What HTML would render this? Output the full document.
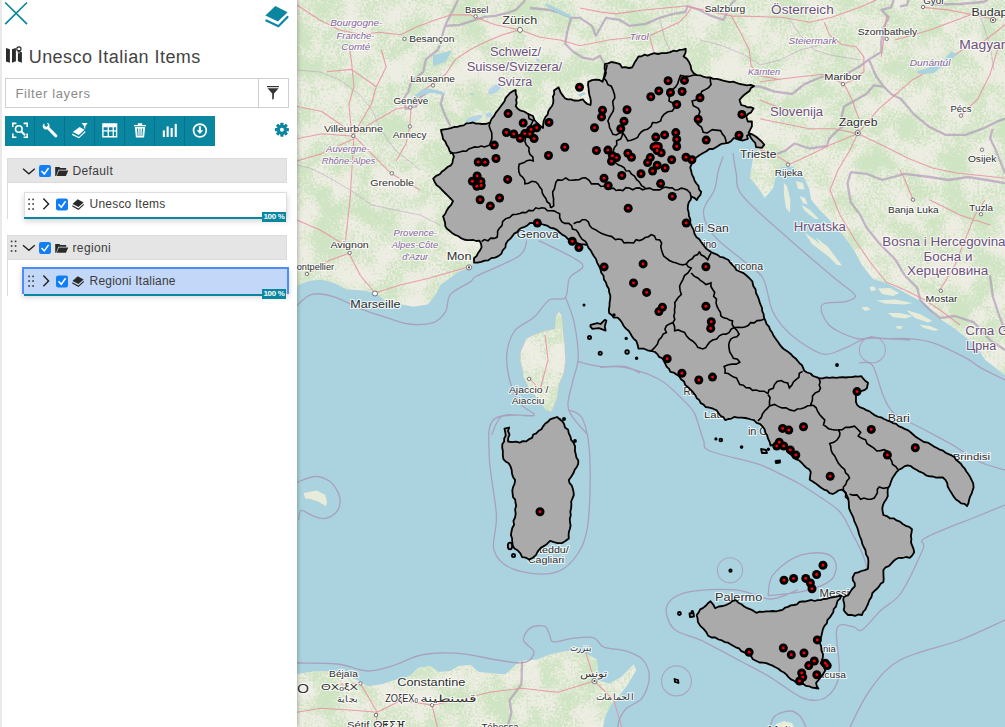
<!DOCTYPE html>
<html><head><meta charset="utf-8">
<style>
html,body{margin:0;padding:0;width:1005px;height:727px;overflow:hidden;background:#f2efe9;font-family:"Liberation Sans",sans-serif;}
#map{position:absolute;left:0;top:0;width:1005px;height:727px;}
#panel{position:absolute;left:0;top:0;width:297px;height:727px;background:#fff;box-shadow:1px 0 4px rgba(0,0,0,0.25);}
#panel .edge{position:absolute;left:0;top:0;width:2px;height:727px;background:#e9e9e9;}
.abs{position:absolute;}
.title{left:28.7px;top:47px;font-size:18px;color:#444;white-space:nowrap;letter-spacing:0.45px}
.filter{left:5px;top:78px;width:282px;height:28px;border:1px solid #cfcfcf;background:transparent}
.filter .ph{position:absolute;left:9.4px;top:7px;font-size:13px;color:#8a8a8a;letter-spacing:0.62px}
.filter .btn{position:absolute;left:252px;top:0;width:30px;height:28px;border-left:1px solid #cfcfcf}
.tb{left:5px;top:116px;width:210px;height:30px;background:#0a86a0}
.tb .b{position:absolute;top:0;width:30px;height:30px;}
.tb .sep{position:absolute;top:0;width:1px;height:30px;background:#06718a}
.grp{left:7px;width:278px;height:23px;background:#e5e5e5;border:1px solid #dcdcdc}
.vline{left:7px;width:1px;background:#dadada}
.item{left:24px;width:261px;height:24px;background:#fff;border:1px solid #dedede;box-shadow:0 3px 6px rgba(0,0,0,0.18)}
.item.sel{left:22px;width:263px;height:25px;background:#c3d7f8;border:2px solid #4f8cf3;border-bottom:none}
.prog{height:2px;background:#0a86a0}
.badge{width:24px;height:10px;background:#0a86a0;color:#fff;font-size:8px;font-weight:bold;line-height:10px;text-align:center;letter-spacing:-0.3px}
.lbl{font-size:12px;color:#3c3c3c;white-space:nowrap}
.lbl.sm{letter-spacing:0.22px}
.cb{width:12px;height:12px;border-radius:2px;background:#0d7df2}
</style></head>
<body>
<svg id="map" width="1005" height="727" viewBox="0 0 1005 727">
<defs>
<filter id="tex" x="297" y="0" width="708" height="727" filterUnits="userSpaceOnUse" color-interpolation-filters="sRGB">
<feTurbulence type="fractalNoise" baseFrequency="0.45" numOctaves="2" seed="3" result="n1"/>
<feTurbulence type="fractalNoise" baseFrequency="0.035" numOctaves="3" seed="7" result="n2"/>
<feComposite in="n1" in2="n2" operator="arithmetic" k1="0" k2="0.45" k3="0.55" k4="0" result="n"/>
<feColorMatrix in="n" type="matrix" values="0 0 0 0 0.81  0 0 0 0 0.895  0 0 0 0 0.76  6 0 0 0 -2.55"/>
</filter>
<clipPath id="landclip"><use href="#eur"/><use href="#afr"/><use href="#cors"/></clipPath>
</defs>
<rect x="0" y="0" width="1005" height="727" fill="#aad3df"/>
<path id="eur" fill="#eeede3" d="M297,0 L1005,0 L1005,375 985.2,360 980.3,352.2 972,342.3 963.8,335.7 955.5,329.1 945.6,322.5 935.7,315.9 929.1,307.7 920.9,301 911,296.1 899.4,289.5 886.2,282.9 873,279 862,265 855,252 849,242.4 842.4,234.2 835.8,227.6 827.6,217.7 819.3,209.4 811.1,199.5 809.4,189.6 804.5,178 792.9,166.5 781.4,166.5 774.8,179.7 773.1,188 764.9,197.9 758.3,188 750,178 752.6,161 759,145.3 754,134 700,120 480,250 475.3,260.9 470.3,267 457.9,272 448,279.4 440.6,284.4 435.6,294.3 428.2,304.2 413.4,306.7 401,304.2 386.1,301.7 376.2,293 363.8,290.6 346.5,289.3 334.1,283.1 321.8,279.4 309.4,280.7 297,285.6 Z"/>
<path id="afr" fill="#eeede3" d="M297,674 317.2,671 337.4,672 357.6,680.2 367.7,686.2 381.8,684.2 394,680.2 410,676.1 418.2,668.1 430.3,666 438.4,672.1 450.5,671.1 458.6,666 470.7,665 478.8,672.1 500,674.1 505.5,674.2 520,661.1 537.5,659.4 551.4,654.1 568.9,650.7 586.4,654.1 596.9,659.4 597.7,669.9 598.6,680.3 609.1,683.8 621.3,676.9 633.5,664.6 636.2,669.9 628.3,683.8 617.8,697.8 610.8,704.8 605.6,715.3 603,727 L297,727Z"/>
<!-- Corsica -->
<path id="cors" fill="#eeede3" stroke="#c9b8c9" stroke-width="0.6" d="M558.9,311.6 561.8,315.4 562.8,328.9 564.7,344.3 565.7,361.6 563.8,373.2 558.9,384.7 557,398.2 553.2,407.8 551.2,411.7 545.5,409.7 541.6,404 535.8,396.3 530,390.5 526.2,382.8 523.3,377 522.4,369.3 520.4,361.6 520.4,352 526.2,338.5 533.9,334.7 545.5,330.8 555,328.9 556,315.4Z"/>
<rect x="297" y="0" width="708" height="727" filter="url(#tex)" clip-path="url(#landclip)"/>
<path fill="none" stroke="#a68fb4" stroke-opacity="0.6" stroke-width="2.3" stroke-linejoin="round" d="M458,0 L452,12 L447.8,19.9 L445.6,24.8 L443.2,32.2 L438.2,49.5 L425.8,59.4 L423.3,71.8 L411,81.7 L408.5,91.7 L403.5,99.1 L406,109 L415.9,106.5 L420.9,96.6 L429.4,91.1 L440.5,92.3 L443.2,94.1 L440.7,104 L445.6,116.4 L450.6,126.3 M445,26 L460,24.9 L474.9,19.9 L484.9,16.9 L494.8,15.9 L507.8,12.9 L515.7,10 L519.7,6 L523.7,2 L525,0 M530,8 L549.6,10 L560,12.9 L571.1,17.9 M571.1,17.9 L567.2,31.8 L565.2,43.8 L573.1,51.7 L583.1,57.7 L593,59.7 L600,55.7 L604.8,64.2 M571.1,17.9 L580,17.9 L591.9,25.9 L595.9,35.8 L605.9,17.9 L619.8,19.9 L629.8,25.9 L645.7,23.9 L659.6,17.9 L673.5,13.9 L685.5,11.9 L687.5,6 L699.4,10 L711.3,15.9 L723.3,19.9 L727.3,11.9 L731.2,4 L735.2,0 M754,86.2 L760,86.6 L774.8,91.6 L792.2,94 L804.5,84.1 L821.9,76.7 L841.7,76.7 L859,66.8 L868.9,59.4 L881.3,52 L881.3,42.1 L883.7,27.2 L888.7,17.3 L881.3,9.9 L891.2,7.4 L893.6,0 M868.9,59.4 L876.3,76.7 L883.7,86.6 L891.2,94 L901,99 L913.4,113.8 L928.3,126.2 L945.6,134.9 L965.4,134.9 L982.7,128.7 L997.6,121.3 L1005,118.8 M883.7,86.6 L873.8,85.4 L866.4,94 L844.1,106.4 L841.7,116.3 L846.6,123.7 L836.7,131.2 L829.3,138.6 L826.8,146 L809.5,148.5 L794.6,143.5 L784.7,151 L774.8,154.7 L762,151 M992.6,128.7 L990.1,138.6 L995.1,148.5 L1000,160.9 L1005,173.2 M850.7,172.2 L866.5,173.8 L882.3,180 L904.5,173.8 L929.8,177 L948.7,180 L967.7,177 L986.7,180 L1005,183.2 M850.7,172.2 L847.5,183.2 L850.7,202.2 L860.2,214.9 L866.5,227.5 L879.1,243.3 L895,259.2 L904.5,275 L917.1,287.6 L920.3,300.3 L929.8,309.7 L940,318 L955,316 L974,322.4 L990,340 L1005,350 M989.8,275 L993,297 L999.3,316 L1005,330 M522,661 L521.5,684.2 L515.5,692.3 L509.5,700.3 L511.5,712.3 L507.5,727 M900,6.3 L907,5 L908.4,0 M930,4.5 L960,4 L983.6,2 L988,0"/>
<path fill="none" stroke="#b99fc0" stroke-opacity="0.55" stroke-width="1" d="M297,70 L320,72 L340,80 L360,95 L372,110 L380,128 L388,140 L395,150 L408,160 L420,170 M297,165 L310,168 L330,178 L350,190 L372,205 L395,210 L420,215 L440,225 M660,20 L665,40 L675,60 L685,70 M700,40 L720,45 L745,55 L760,65 L780,60 L800,50 L820,45 M790,20 L800,35 L815,50 L830,55 L860,60 M981,18 L985,30 L990,45 L994,70"/>
<path fill="none" stroke="#e8919f" stroke-opacity="0.85" stroke-width="1.1" stroke-linejoin="round" d="M297,5 L319.3,19.8 L339.1,29.7 L361.4,34.7 L378.7,32.2 L401,34.7 L415.9,27.2 L435.7,19.8 L450.6,14.9 L470.4,14.9 L475.4,17.3 M349,44.6 L351.5,61.9 L354,86.7 L349,104 L351.5,133.8 M381.2,49.5 L386.2,66.9 L376.3,86.7 L371.3,104 L354,133.8 M354,133.8 L378.7,118.9 L396.1,109 L411,106.5 M411,106.5 L420.9,91.7 L435.7,81.7 L445.6,74.3 L455.5,59.4 L470.4,49.5 L485.3,42.1 L502.6,34.7 L520,29.7 M475.4,17.3 L495.2,24.8 L520,29.7 L540,37.2 L560,40 L580,45.8 L609.9,39.8 L649.7,35.8 M354,136.2 L371.3,153.6 L391.1,173.4 L420,190 M409.7,126.3 L406,143.7 L396.1,161 M411,109 L409.7,126.3 M297,106.5 L321.8,111.5 L354,133.8 M297,138.7 L321.8,133.8 L354,136.2 M297,161 L321.8,153.6 L354,138.7 M326.7,71.8 L351.5,69.4 L376.3,86.7 M354,136.2 L350,200 L345,245 L360,275 L375,293 M375,293 L400,285 L430,278 L468,267 M307,274 L330,260 L350,253 M297,220 L320,230 L345,245 M580,8 L599.9,11.9 L615.8,13.9 L643.7,10 L665.6,8 L685.5,6 L731.2,15.9 L782.3,17.3 L809.5,22.3 L831.8,17.3 L859,7.4 L876.3,0 M649.7,35.8 L679.5,21.9 L685.5,15.9 L691.4,8 M649.7,35.8 L653.6,51.7 M731.2,15.9 L739.2,29.9 L749.2,49.8 L751.1,65.7 L759.1,75.6 L780,79.6 M824.3,22.3 L829.3,34.6 L841.7,44.5 L856.5,47 L863.9,56.9 L863.9,71.8 L854,79.2 L844.1,84.1 L851.6,99 L859,118.8 L857.7,133.6 M760,81.7 L779.8,79.2 L799.6,76.7 L824.3,74.2 L844.1,84.1 M760,118.8 L784.7,123.7 L809.5,128.7 L834.2,128.7 L857.7,133.6 M857.7,133.6 L883.7,146 L908.5,158.4 L933.2,168.3 L958,173.2 L982.7,175.7 L1005,178.2 M1005,24.7 L982.7,42.1 L962.9,49.5 L940.6,64.3 L913.4,79.2 L896.1,94 L878.8,108.9 L857.7,133.6 M923.3,7.4 L948.1,9.9 L972.8,14.8 L997.6,19.8 M886.7,14.8 L883.7,39.6 L881.3,56.9 M961,115.6 L977.8,99 L990.1,74.2 L997.6,49.5 M857.7,133.6 L830,145 L810,155 L790,164 L775,155 L760,150 M857.7,133.6 L850,150 L838,170 L830,190 L840,215 L855,240 L870,262 L886,282 L905,290 L925,300 L940,310 L960,325 M913,199.7 L905,180 L900,170 M940,290 L955,265 L965,240 L975,215 L985,200 M297,712.3 L321,708.3 L353.1,710.3 L377.2,712.3 L401.2,700.3 L432.1,705.1 L457.4,700.3 L489.5,692.3 L521.5,688.3 L557.6,692.3 L594.5,681 L613.8,700.3 L621.8,727 M377.2,712.3 L376,727 M594.5,681 L585.7,652.2 M432.1,705.1 L437.3,727 M337.1,684.2 L360.4,683.4 L377.2,712.3 M545,335 L548,360 L540,390 L530,379 M760,100 L790,112 L810,110 M895,40 L930,30 L970,15 M930,200 L960,215 L990,225"/>
<path fill="none" stroke="#a898b8" stroke-opacity="0.85" stroke-width="1.3" stroke-linejoin="round" d="M297.0,305.4 C299.5,303.5 305.7,295.7 311.9,294.3 C318.1,292.9 325.9,294.3 334.1,296.8 C342.4,299.3 353.1,305.8 361.4,309.1 C369.7,312.4 375.9,314.1 383.7,316.6 C391.5,319.1 400.1,323.0 408.4,324.0 C416.6,325.0 427.0,324.8 433.2,322.7 C439.4,320.6 442.7,316.3 445.6,311.6 C448.5,306.9 446.4,299.2 450.5,294.3 C454.6,289.4 465.9,285.0 470.3,281.9 C474.8,278.8 469.1,280.1 477.2,275.8 C485.3,271.5 510.8,261.9 519.0,256.0 C527.2,250.1 525.4,243.2 526.7,240.6 M538.8,240.6 C544.7,243.5 566.7,253.8 574.0,258.2 C581.3,262.6 583.5,263.7 582.8,267.0 C582.1,270.3 572.5,272.9 569.6,278.0 C566.7,283.1 568.6,294.1 565.2,297.8 C561.8,301.5 554.5,296.8 549.3,300.0 C544.1,303.2 539.7,312.2 533.9,317.3 C528.1,322.4 519.2,325.0 514.7,330.8 C510.2,336.6 508.0,344.3 507.0,352.0 C506.0,359.7 507.0,368.7 508.9,377.0 C510.8,385.3 514.3,395.6 518.5,402.0 C522.7,408.4 536.5,413.2 533.9,415.5 C531.3,417.8 510.2,412.3 503.1,415.5 C496.1,418.7 493.5,431.6 491.6,434.8 M565.2,297.8 C565.4,298.2 565.1,295.8 566.6,300.0 C568.1,304.2 572.4,313.5 574.3,323.1 C576.2,332.7 578.5,347.9 578.2,357.8 C577.9,367.8 574.0,374.2 572.4,382.8 C570.8,391.4 566.0,401.0 568.6,409.7 C571.2,418.4 584.6,430.6 587.8,434.8 M578.2,361.6 C581.7,362.4 591.7,365.6 599.4,366.4 C607.1,367.2 617.6,365.3 624.4,366.4 C631.2,367.5 637.4,372.1 640.0,373.2 M600.0,367.4 C604.0,367.4 614.3,365.4 624.2,367.4 C634.1,369.4 649.5,374.0 659.4,379.5 C669.3,385.0 677.7,394.7 683.6,400.4 C689.5,406.1 691.3,407.0 694.6,413.6 C697.9,420.2 700.8,433.8 703.4,440.0 C706.0,446.2 700.8,447.0 710.0,451.0 C719.2,455.0 746.3,460.2 758.4,464.2 C770.5,468.2 775.7,471.9 782.6,475.2 C789.5,478.5 797.1,482.5 800.0,484.0 M533.9,415.5 C527.2,416.1 501.4,412.4 494.0,419.3 C486.6,426.2 488.9,440.7 489.3,456.7 C489.7,472.7 495.6,499.6 496.4,515.2 C497.2,530.8 491.3,541.2 494.0,550.2 C496.7,559.2 503.4,565.0 512.7,568.9 C522.1,572.8 540.0,575.1 550.1,573.6 C560.2,572.1 567.3,567.4 573.5,559.6 C579.7,551.8 584.8,543.9 587.5,526.8 C590.2,509.6 590.6,474.6 589.8,456.7 C589.0,438.8 586.3,427.1 582.8,419.3 C579.3,411.5 571.0,411.3 568.6,409.7 M723.0,156.5 C722.2,159.1 719.4,166.4 718.0,172.0 C716.6,177.6 716.8,183.3 714.4,190.0 C712.0,196.7 703.4,204.3 703.4,212.0 C703.4,219.7 707.8,228.1 714.4,236.2 C721.0,244.3 734.9,253.4 743.0,260.4 C751.1,267.4 758.0,269.9 762.8,278.0 C767.6,286.1 768.3,300.7 771.6,308.8 C774.9,316.9 777.9,320.9 782.6,326.4 C787.3,331.9 793.1,337.2 800.0,341.8 C806.9,346.4 816.3,353.2 824.0,354.2 C831.7,355.2 840.1,349.8 846.0,347.6 C851.9,345.4 854.8,342.8 859.2,341.0 C863.6,339.2 870.2,337.3 872.4,336.6 M733.0,153.2 C733.5,156.5 734.6,165.8 736.2,173.0 C737.8,180.2 734.0,185.2 742.8,196.2 C751.6,207.2 773.6,225.3 789.0,239.0 C804.4,252.7 824.0,269.3 835.0,278.6 C846.0,287.9 853.3,291.1 855.0,295.0 C856.7,298.9 850.5,300.0 845.0,301.7 C839.5,303.4 824.7,301.1 822.0,305.0 C819.3,308.9 823.5,319.5 829.0,325.0 C834.5,330.5 847.3,335.8 855.0,338.0 C862.7,340.2 865.8,337.7 875.0,338.0 C884.2,338.3 904.2,339.7 910.0,340.0 M883.4,338.8 C888.2,338.8 903.6,338.1 912.0,338.8 C920.4,339.5 924.8,339.9 934.0,343.2 C943.2,346.5 959.3,354.6 967.0,358.6 C974.7,362.6 973.7,363.8 980.0,367.4 C986.3,371.0 1000.8,377.9 1005.0,380.0 M859.2,363.0 C861.4,363.4 868.4,359.7 872.4,365.2 C876.4,370.7 879.7,387.9 883.4,396.0 C887.1,404.1 887.8,408.1 894.4,413.6 C901.0,419.1 913.5,423.9 923.0,429.0 C932.5,434.1 942.1,438.9 951.6,444.4 C961.1,449.9 971.1,457.7 980.0,462.0 C988.9,466.3 1000.8,468.7 1005.0,470.0 M800.0,484.0 C803.3,486.2 813.3,492.3 820.0,497.0 C826.7,501.7 834.5,505.7 840.0,512.0 C845.5,518.3 849.3,528.2 853.0,535.0 C856.7,541.8 859.7,547.0 862.0,553.0 C864.3,559.0 867.0,564.3 867.0,571.0 C867.0,577.7 862.8,589.3 862.0,593.0 M1005.0,505.0 C1000.5,506.8 991.3,510.5 978.0,516.0 C964.7,521.5 934.4,532.5 925.2,538.0 C916.0,543.5 927.0,539.8 923.0,549.0 C919.0,558.2 908.0,582.8 901.0,593.0 C894.0,603.2 887.7,603.8 881.2,610.0 C874.7,616.2 866.7,627.2 862.0,630.0 C857.3,632.8 857.2,626.8 853.0,626.6 C848.8,626.4 839.1,620.9 836.8,628.9 C834.5,636.9 841.0,663.3 839.1,674.8 C837.2,686.3 831.4,694.0 825.3,697.8 C819.2,701.6 811.6,701.2 802.4,697.8 C793.2,694.3 780.5,683.2 770.2,677.1 C759.9,671.0 751.9,667.1 740.4,661.0 C728.9,654.9 712.4,645.8 701.3,640.4 C690.2,635.0 679.5,634.6 673.8,628.9 C668.1,623.1 664.6,612.0 666.9,605.9 C669.2,599.8 676.1,594.8 687.6,592.1 C699.1,589.4 722.0,588.8 735.8,589.9 C749.6,591.0 759.9,599.0 770.2,599.0 C780.5,599.0 793.2,591.4 797.8,589.9 M768.0,595.7 C768.8,592.3 768.0,581.9 772.5,575.5 C777.0,569.1 786.8,561.1 795.0,557.4 C803.2,553.6 815.2,552.2 822.0,553.0 C828.8,553.8 834.0,557.5 835.5,562.0 C837.0,566.5 836.2,575.1 831.0,580.0 C825.8,584.9 814.5,588.6 804.0,591.2 C793.5,593.8 774.0,595.0 768.0,595.7 M770.0,727.0 C770.8,725.2 771.7,718.7 775.0,716.0 C778.3,713.3 785.8,711.0 790.0,711.0 C794.2,711.0 797.3,713.3 800.0,716.0 C802.7,718.7 805.0,725.2 806.0,727.0 M297.0,663.0 C303.7,663.2 325.6,662.7 337.4,664.0 C349.2,665.3 358.1,670.8 367.7,671.0 C377.3,671.2 386.7,667.5 395.0,665.0 C403.3,662.5 409.8,658.0 417.3,656.0 C424.8,654.0 432.0,653.3 440.0,653.0 C448.0,652.7 452.1,652.6 465.4,654.2 C478.7,655.9 508.6,663.2 520.0,662.9 C531.4,662.6 533.4,656.2 534.0,652.4 C534.6,648.6 524.1,644.3 523.5,640.2 C522.9,636.1 527.0,630.2 530.5,627.9 C534.0,625.6 541.3,625.0 544.5,626.2 C547.7,627.4 548.2,632.3 549.7,634.9 C551.2,637.5 549.4,641.3 553.2,641.9 C557.0,642.5 565.7,639.1 572.4,638.4 C579.1,637.7 588.2,636.1 593.4,637.6 C598.6,639.1 598.6,645.0 603.8,647.2 C609.0,649.4 618.4,648.7 624.8,650.7 C631.2,652.7 638.2,655.0 642.3,659.4 C646.4,663.8 649.3,670.5 649.3,676.9 C649.3,683.3 646.1,692.6 642.3,697.8 C638.5,703.0 630.3,704.8 626.5,708.3 C622.7,711.8 621.1,715.7 619.6,718.8 C618.1,721.9 618.1,725.6 617.8,727.0 M297.0,482.3 C300.0,481.3 309.7,476.6 315.2,476.5 C320.7,476.4 326.1,478.8 330.0,481.5 C333.9,484.2 336.6,489.4 338.3,493.0 C340.0,496.6 340.4,499.7 340.0,503.0 C339.6,506.3 338.4,510.2 335.8,512.8 C333.2,515.4 327.9,518.0 324.2,518.6 C320.5,519.2 317.4,517.6 313.5,516.2 C309.6,514.8 303.6,509.8 301.1,510.4 C298.6,511.0 299.1,518.4 298.7,520.0 M1005.0,620.0 C997.5,623.3 977.5,633.3 960.0,640.0 C942.5,646.7 915.0,651.7 900.0,660.0 C885.0,668.3 878.3,678.8 870.0,690.0 C861.7,701.2 853.3,720.8 850.0,727.0"/>
<circle cx="872.4" cy="349.8" r="13" fill="none" stroke="#a898b8" stroke-opacity="0.75" stroke-width="1.1"/>
<circle cx="676.5" cy="680.9" r="15" fill="none" stroke="#a898b8" stroke-opacity="0.75" stroke-width="1.1"/>
<circle cx="730" cy="570.3" r="12.6" fill="none" stroke="#a898b8" stroke-opacity="0.75" stroke-width="1.1"/>
<g fill="#a9cdee" opacity="0.75"><ellipse cx="495" cy="89" rx="8" ry="3.5" transform="rotate(-35 495 89)"/><ellipse cx="474" cy="119" rx="9" ry="2.8" transform="rotate(-20 474 119)"/><ellipse cx="489" cy="115" rx="3.5" ry="2.5"/><circle cx="472" cy="94" r="1.4"/><ellipse cx="538" cy="60" rx="2" ry="1.5"/></g>
<g fill="#aad3df"><path d="M415,95.5 L421.4,89.9 L427.8,88.3 L435.7,89.9 L442.1,91.5 L445.3,93.9 L441.3,94.7 L434.1,93.1 L427,93.1 L421.4,95.5 L416.6,97.1 L413.4,105 L411.8,106.6 L412,100Z"/><path d="M433,55.3 L451.9,50.6 L445.6,61.6 L433,66.4Z"/><path d="M545,3 L552,6 L560,10 L572,16 L570,18 L558,13 L546,6Z"/><path d="M578,94.5 L584,92.3 L586,94 L580,96.5Z"/><path d="M916.3,71.4 L929.5,67.3 L942.8,60.6 L951.8,51.6 L956.8,54.9 L948.5,61.5 L933.7,73 L918.8,73.9Z"/></g>
<g fill="#e6ecd9"><path d="M783.8,183 L787,186 L790.4,200 L790,212.7 L786,208 L784,195Z"/><path d="M796,181 L803,183 L804.5,189.6 L798,189Z"/><path d="M799.5,196 L805,198 L807.8,204.5 L803,203Z"/><path d="M801,204.5 L810,210 L819,219 L815,219 L805,211Z"/><path d="M804.5,232.5 L815,240 L832.5,255.6 L828,256 L812,244Z"/><path d="M816,237.5 L828,247 L842,265.5 L837,265 L824,252Z"/><path d="M878,288.5 L890,288 L899.4,293 L893,296.1 L882,294Z"/><path d="M876.3,300.5 L895,299.4 L912.6,303 L905,304.4 L885,303.5Z"/><path d="M887.9,313 L900,313 L912.6,316 L905,318.4 L893,317Z"/><path d="M906,310 L920,314 L932.4,321 L928,322.5 L915,318Z"/><path d="M861.5,307.5 L867,306.8 L870.5,309.5 L865,311Z"/><path d="M896,326 L902.7,326.5 L901,329 L897,328.5Z"/><path d="M919.2,324.5 L930,326 L939,330 L934,330.8 L924,328Z"/><path d="M869.7,287 L874,286.2 L876.3,290 L871,291.2Z"/><path d="M303.6,493 L316.8,490.6 L325,494.7 L327.1,502.1 L325.9,506.2 L317.6,501.3 L309.4,498.8 L305.3,498.8Z"/><path d="M776,724 L784,721 L792,723 L794,727 L776,727Z"/></g>
<g fill="#fff" stroke="#666" stroke-width="0.9"><circle cx="475.6" cy="16.4" r="1.7"/><circle cx="404.5" cy="38.9" r="1.7"/><circle cx="433" cy="85.4" r="1.7"/><circle cx="410.2" cy="107.5" r="1.7"/><circle cx="353.3" cy="136" r="1.7"/><circle cx="409.9" cy="126.5" r="1.7"/><circle cx="391.8" cy="173.3" r="1.7"/><circle cx="349.7" cy="252.9" r="1.7"/><circle cx="306.9" cy="274" r="1.7"/><circle cx="886.7" cy="38.9" r="1.7"/><circle cx="842.9" cy="84.1" r="1.7"/><circle cx="961" cy="115.6" r="1.7"/><circle cx="982" cy="149.7" r="1.7"/><circle cx="788" cy="164.6" r="1.7"/><circle cx="913" cy="199.7" r="1.7"/><circle cx="981" cy="214.2" r="1.7"/><circle cx="940.8" cy="290.8" r="1.7"/><circle cx="529.1" cy="378.9" r="1.7"/><circle cx="360.4" cy="683.4" r="1.7"/><circle cx="432.1" cy="705.1" r="1.7"/><circle cx="376" cy="715.1" r="1.7"/><circle cx="923" cy="7" r="1.7"/><circle cx="520" cy="29.9" r="2.5"/><circle cx="375" cy="293.5" r="2.5"/><circle cx="469" cy="267.4" r="2.6"/><circle cx="857.7" cy="133.1" r="2.6"/><circle cx="594.5" cy="681" r="2.6"/><circle cx="993" cy="20" r="2.6"/></g>
<g fill="#444"><circle cx="469" cy="267.4" r="1.1"/><circle cx="857.7" cy="133.1" r="1.1"/><circle cx="594.5" cy="681" r="1.1"/><circle cx="993" cy="20" r="1.1"/></g>
<g font-family="Liberation Sans, sans-serif" stroke="#fff" stroke-opacity="0.75" stroke-width="2.2" stroke-linejoin="round" style="paint-order:stroke"><text x="465" y="12.9" font-size="9.36" textLength="23.4" lengthAdjust="spacingAndGlyphs" fill="#2f2f2f" style="">Basel</text><text x="502.3" y="24.4" font-size="11.65" textLength="34.8" lengthAdjust="spacingAndGlyphs" fill="#2f2f2f" style="">Zürich</text><text x="489.9" y="56.2" font-size="12.27" textLength="51.2" lengthAdjust="spacingAndGlyphs" fill="#6e5179" style="">Schweiz/</text><text x="466.7" y="71" font-size="12.27" textLength="95.5" lengthAdjust="spacingAndGlyphs" fill="#6e5179" style="">Suisse/Svizzera/</text><text x="497.5" y="85.5" font-size="12.27" textLength="34.8" lengthAdjust="spacingAndGlyphs" fill="#6e5179" style="">Svizra</text><text x="330.2" y="26" font-size="9.88" textLength="52.2" lengthAdjust="spacingAndGlyphs" fill="#86659a" style="font-style:italic;">Bourgogne-</text><text x="336.5" y="38.5" font-size="9.88" textLength="38.0" lengthAdjust="spacingAndGlyphs" fill="#86659a" style="font-style:italic;">Franche-</text><text x="341.3" y="49.5" font-size="9.88" textLength="29.0" lengthAdjust="spacingAndGlyphs" fill="#86659a" style="font-style:italic;">Comté</text><text x="409.2" y="42" font-size="9.36" textLength="45.2" lengthAdjust="spacingAndGlyphs" fill="#2f2f2f" style="">Besançon</text><text x="410.2" y="82" font-size="9.36" textLength="44.8" lengthAdjust="spacingAndGlyphs" fill="#2f2f2f" style="">Lausanne</text><text x="393.4" y="103.5" font-size="9.36" textLength="34.8" lengthAdjust="spacingAndGlyphs" fill="#2f2f2f" style="">Genève</text><text x="323.9" y="132" font-size="9.36" textLength="59.1" lengthAdjust="spacingAndGlyphs" fill="#2f2f2f" style="">Villeurbanne</text><text x="392.8" y="138" font-size="9.36" textLength="33.8" lengthAdjust="spacingAndGlyphs" fill="#2f2f2f" style="">Annecy</text><text x="326.1" y="151.5" font-size="9.88" textLength="43.6" lengthAdjust="spacingAndGlyphs" fill="#86659a" style="font-style:italic;">Auvergne-</text><text x="321.7" y="163.5" font-size="9.88" textLength="53.7" lengthAdjust="spacingAndGlyphs" fill="#86659a" style="font-style:italic;">Rhône-Alpes</text><text x="370.3" y="185.5" font-size="9.36" textLength="43.7" lengthAdjust="spacingAndGlyphs" fill="#2f2f2f" style="">Grenoble</text><text x="704.4" y="12" font-size="9.36" textLength="40.8" lengthAdjust="spacingAndGlyphs" fill="#2f2f2f" style="">Salzburg</text><text x="629.8" y="40" font-size="9.88" textLength="18.9" lengthAdjust="spacingAndGlyphs" fill="#86659a" style="font-style:italic;">Tirol</text><text x="748" y="75" font-size="9.88" textLength="32.0" lengthAdjust="spacingAndGlyphs" fill="#86659a" style="font-style:italic;">Kärnten</text><text x="771.1" y="14" font-size="12.27" textLength="62.6" lengthAdjust="spacingAndGlyphs" fill="#6e5179" style="">Österreich</text><text x="923.3" y="3.5" font-size="9.36" textLength="21.1" lengthAdjust="spacingAndGlyphs" fill="#2f2f2f" style="">Győr</text><text x="971.6" y="15.5" font-size="11.65" textLength="52.4" lengthAdjust="spacingAndGlyphs" fill="#2f2f2f" style="">Budapest</text><text x="857.7" y="35" font-size="9.36" textLength="59.4" lengthAdjust="spacingAndGlyphs" fill="#2f2f2f" style="">Szombathely</text><text x="788.5" y="43.5" font-size="9.88" textLength="48.2" lengthAdjust="spacingAndGlyphs" fill="#86659a" style="font-style:italic;">Steiermark</text><text x="959.2" y="49" font-size="12.27" textLength="87.8" lengthAdjust="spacingAndGlyphs" fill="#6e5179" style="">Magyarország</text><text x="909.7" y="66" font-size="9.88" textLength="40.8" lengthAdjust="spacingAndGlyphs" fill="#86659a" style="font-style:italic;">Dunántúl</text><text x="824.3" y="80" font-size="9.36" textLength="37.2" lengthAdjust="spacingAndGlyphs" fill="#2f2f2f" style="">Maribor</text><text x="769.9" y="116" font-size="12.27" textLength="53.2" lengthAdjust="spacingAndGlyphs" fill="#6e5179" style="">Slovenija</text><text x="950.5" y="111.5" font-size="9.36" textLength="21.1" lengthAdjust="spacingAndGlyphs" fill="#2f2f2f" style="">Pécs</text><text x="838.7" y="126" font-size="11.65" textLength="38.8" lengthAdjust="spacingAndGlyphs" fill="#2f2f2f" style="">Zagreb</text><text x="967.9" y="162" font-size="9.36" textLength="28.4" lengthAdjust="spacingAndGlyphs" fill="#2f2f2f" style="">Osijek</text><text x="774.8" y="176" font-size="9.36" textLength="27.8" lengthAdjust="spacingAndGlyphs" fill="#2f2f2f" style="">Rijeka</text><text x="740" y="157.5" font-size="11.65" textLength="36.4" lengthAdjust="spacingAndGlyphs" fill="#2f2f2f" style="">Trieste</text><text x="888" y="213" font-size="9.36" textLength="50.6" lengthAdjust="spacingAndGlyphs" fill="#2f2f2f" style="">Banja Luka</text><text x="969.3" y="211" font-size="9.36" textLength="23.7" lengthAdjust="spacingAndGlyphs" fill="#2f2f2f" style="">Tuzla</text><text x="793.8" y="230.5" font-size="12.27" textLength="52.2" lengthAdjust="spacingAndGlyphs" fill="#6e5179" style="">Hrvatska</text><text x="882.3" y="245.5" font-size="12.27" textLength="123.2" lengthAdjust="spacingAndGlyphs" fill="#6e5179" style="">Bosna i Hercegovina</text><text x="923.4" y="260.5" font-size="12.27" textLength="49.0" lengthAdjust="spacingAndGlyphs" fill="#6e5179" style="">Босна и</text><text x="907" y="275" font-size="12.27" textLength="81.3" lengthAdjust="spacingAndGlyphs" fill="#6e5179" style="">Херцеговина</text><text x="925.6" y="302" font-size="9.36" textLength="32.0" lengthAdjust="spacingAndGlyphs" fill="#2f2f2f" style="">Mostar</text><text x="965.2" y="334.5" font-size="12.27" textLength="62.8" lengthAdjust="spacingAndGlyphs" fill="#6e5179" style="">Crna Gora</text><text x="966.1" y="349.5" font-size="12.27" textLength="30.1" lengthAdjust="spacingAndGlyphs" fill="#6e5179" style="">Црна</text><text x="393.6" y="236" font-size="9.88" textLength="43.3" lengthAdjust="spacingAndGlyphs" fill="#86659a" style="font-style:italic;">Provence-</text><text x="391.8" y="248" font-size="9.88" textLength="46.3" lengthAdjust="spacingAndGlyphs" fill="#86659a" style="font-style:italic;">Alpes-Côte</text><text x="402.2" y="259.5" font-size="9.88" textLength="26.0" lengthAdjust="spacingAndGlyphs" fill="#86659a" style="font-style:italic;">d'Azur</text><text x="330.4" y="248" font-size="9.36" textLength="38.4" lengthAdjust="spacingAndGlyphs" fill="#2f2f2f" style="">Avignon</text><text x="289" y="270" font-size="9.36" textLength="45.1" lengthAdjust="spacingAndGlyphs" fill="#2f2f2f" style="">Montpellier</text><text x="350.2" y="307.5" font-size="11.65" textLength="50.3" lengthAdjust="spacingAndGlyphs" fill="#2f2f2f" style="">Marseille</text><text x="446.7" y="260.4" font-size="11.65" textLength="24.8" lengthAdjust="spacingAndGlyphs" fill="#2f2f2f" style="">Mon</text><text x="516.8" y="238" font-size="11.65" textLength="41.8" lengthAdjust="spacingAndGlyphs" fill="#2f2f2f" style="">Genova</text><text x="630" y="232" font-size="11.65" textLength="98.7" lengthAdjust="spacingAndGlyphs" fill="#2f2f2f" style="">Repubblica di San</text><text x="686" y="247.5" font-size="11.65" textLength="30.6" lengthAdjust="spacingAndGlyphs" fill="#2f2f2f" style="">Marino</text><text x="727.5" y="269.7" font-size="11.02" textLength="35.5" lengthAdjust="spacingAndGlyphs" fill="#2f2f2f" style="">Ancona</text><text x="683.6" y="394.5" font-size="11.65" textLength="26.4" lengthAdjust="spacingAndGlyphs" fill="#2f2f2f" style="">Roma</text><text x="703.9" y="417.5" font-size="9.36" textLength="31.1" lengthAdjust="spacingAndGlyphs" fill="#2f2f2f" style="">Latina</text><text x="747.9" y="434.5" font-size="11.44" textLength="19.3" lengthAdjust="spacingAndGlyphs" fill="#2f2f2f" style="">in C</text><text x="887.8" y="421.5" font-size="11.65" textLength="22.0" lengthAdjust="spacingAndGlyphs" fill="#2f2f2f" style="">Bari</text><text x="952.7" y="460" font-size="9.36" textLength="37.3" lengthAdjust="spacingAndGlyphs" fill="#2f2f2f" style="">Brindisi</text><text x="508.9" y="392.5" font-size="9.88" textLength="39.4" lengthAdjust="spacingAndGlyphs" fill="#2f2f2f" style="">Ajaccio /</text><text x="511.8" y="404" font-size="9.88" textLength="32.7" lengthAdjust="spacingAndGlyphs" fill="#2f2f2f" style="">Aiacciu</text><text x="520" y="553" font-size="9.88" textLength="48.8" lengthAdjust="spacingAndGlyphs" fill="#2f2f2f" style="">Casteddu/</text><text x="527.9" y="563" font-size="9.88" textLength="36.2" lengthAdjust="spacingAndGlyphs" fill="#2f2f2f" style="">Cagliari</text><text x="715.1" y="600.5" font-size="11.65" textLength="47.1" lengthAdjust="spacingAndGlyphs" fill="#2f2f2f" style="">Palermo</text><text x="819.6" y="597" font-size="11.65" textLength="42.4" lengthAdjust="spacingAndGlyphs" fill="#2f2f2f" style="">Messina</text><text x="803" y="652" font-size="9.88" textLength="32.7" lengthAdjust="spacingAndGlyphs" fill="#2f2f2f" style="">Catania</text><text x="806" y="678" font-size="9.88" textLength="40.0" lengthAdjust="spacingAndGlyphs" fill="#2f2f2f" style="">Siracusa</text><text x="768" y="734" font-size="11.65" textLength="29.8" lengthAdjust="spacingAndGlyphs" fill="#2f2f2f" style="">Malta</text><text x="329.1" y="677" font-size="8.84" textLength="28.9" lengthAdjust="spacingAndGlyphs" fill="#2f2f2f" style="">Béjaïa</text><text x="321" y="689.5" font-size="8.84" textLength="37.0" lengthAdjust="spacingAndGlyphs" fill="#2f2f2f" style="">ΘXₒξX</text><text x="397.2" y="686" font-size="11.65" textLength="68.2" lengthAdjust="spacingAndGlyphs" fill="#2f2f2f" style="">Constantine</text><text x="385.2" y="701.5" font-size="11.65" textLength="32.8" lengthAdjust="spacingAndGlyphs" fill="#2f2f2f" style="">ZOξEXₒ</text><text x="347.1" y="727.5" font-size="9.36" textLength="58.9" lengthAdjust="spacingAndGlyphs" fill="#2f2f2f" style="">Sétif ⵙⵟⵉⴼ</text><text x="481.4" y="730" font-size="9.36" textLength="37.3" lengthAdjust="spacingAndGlyphs" fill="#2f2f2f" style="">Tébessa</text><text x="297" y="693" font-size="13.52" textLength="12.0" lengthAdjust="spacingAndGlyphs" fill="#2f2f2f" style="">O</text><text x="569.7" y="651" font-size="9" textLength="22.0" lengthAdjust="spacingAndGlyphs" fill="#333">بنزرت</text><text x="579.7" y="677" font-size="10" textLength="28.0" lengthAdjust="spacingAndGlyphs" fill="#333">تونس</text><text x="595.7" y="700" font-size="9" textLength="38.1" lengthAdjust="spacingAndGlyphs" fill="#333">الحمامات</text><text x="337.1" y="701.5" font-size="9" textLength="20.9" lengthAdjust="spacingAndGlyphs" fill="#333">بجاية</text><text x="420" y="701.5" font-size="10" textLength="57.4" lengthAdjust="spacingAndGlyphs" fill="#333">قسنطينة</text></g>
<g id="italy" fill="#aaaaaa" stroke="#000" stroke-width="1.8" stroke-linejoin="round">
<path d="M441.0,130.0 444.3,129.4 447.6,128.9 450.9,128.2 454.0,127.0 457.3,126.9 460.4,125.9 463.7,125.4 466.5,123.3 469.8,123.2 473.0,122.5 475.9,123.7 479.0,123.7 482.0,124.0 486.1,123.9 490.0,122.5 491.5,119.0 494.0,116.2 495.7,112.9 498.0,110.0 500.3,107.0 502.5,104.0 504.5,101.3 505.6,98.1 507.8,95.5 510.0,93.0 512.7,91.2 515.7,90.0 515.7,93.6 517.0,97.0 516.1,99.9 516.7,103.1 515.7,106.0 517.5,108.5 520.0,110.4 524.1,111.5 527.8,113.7 533.0,116.0 534.4,120.0 537.1,123.0 540.0,125.8 543.0,128.0 543.2,124.2 543.8,120.5 545.4,117.0 547.6,114.6 548.3,111.3 550.0,108.5 552.0,106.0 553.2,103.0 553.4,99.9 552.9,96.7 554.3,93.8 554.0,90.6 558.6,87.3 560.8,92.8 562.9,95.6 565.0,98.3 567.9,99.3 571.1,99.3 574.0,100.5 578.5,100.7 582.8,99.4 584.7,101.8 587.0,103.8 590.5,105.0 590.9,101.6 590.4,98.3 589.4,95.0 588.8,91.7 588.6,88.4 588.0,85.1 588.3,81.8 592.0,80.2 596.0,79.6 599.5,80.0 602.6,81.8 603.4,78.8 605.0,76.0 606.0,73.0 604.6,68.7 604.8,64.2 608.2,63.4 611.4,62.0 615.8,62.8 620.0,64.2 622.0,67.5 625.3,67.2 628.7,68.0 632.0,67.5 633.6,64.7 635.0,61.9 636.8,59.2 638.5,56.5 641.6,56.3 644.4,54.7 647.7,55.6 650.6,54.3 654.2,53.2 658.0,54.0 661.6,53.2 666.1,53.2 670.4,52.1 673.3,50.7 676.7,51.2 679.6,49.9 682.7,49.6 685.8,48.8 685.5,52.9 683.6,56.5 686.8,58.7 689.0,62.0 690.6,65.7 691.3,69.7 693.5,73.0 696.8,75.2 700.2,75.3 703.3,76.7 706.6,77.5 710.0,77.4 713.1,78.9 716.7,78.8 720.0,79.6 723.2,80.7 726.5,81.3 729.7,82.2 733.2,81.7 736.4,82.9 739.8,84.0 743.4,84.7 746.9,85.4 750.6,84.8 754.0,86.2 751.0,87.9 749.4,91.1 746.7,93.0 744.0,95.0 741.6,97.4 739.5,100.0 741.2,105.0 744.5,105.8 747.4,107.3 750.6,107.2 753.6,108.3 751.1,112.4 748.2,113.9 746.2,116.5 747.8,121.5 751.9,121.5 751.9,126.4 750.2,129.7 748.6,133.0 752.8,134.7 755.8,136.5 758.5,138.8 761.6,141.5 764.3,144.6 761.8,147.9 756.1,147.1 755.2,142.9 752.9,140.5 750.8,137.8 749.5,134.7 747.0,135.5 747.8,138.8 742.8,140.5 738.7,139.6 733.8,138.0 731.3,140.9 728.0,142.9 724.9,143.4 721.7,143.8 718.9,145.4 716.0,147.3 713.0,149.0 709.3,149.0 706.5,151.2 702.7,153.3 699.0,155.5 695.8,157.9 692.4,160.0 691.7,163.9 690.2,167.6 691.2,170.9 691.9,174.4 693.6,177.5 694.6,180.8 696.4,183.5 698.5,185.9 699.0,189.4 701.2,191.8 700.4,194.9 698.3,197.3 696.8,200.0 694.3,197.8 691.3,196.6 690.8,199.7 688.8,202.3 688.0,205.4 687.7,209.0 688.7,212.5 688.9,216.0 690.4,219.4 690.2,223.0 691.8,226.6 693.7,230.1 694.6,234.0 696.4,237.1 699.3,239.3 701.3,242.2 703.4,245.0 705.8,248.2 708.9,250.6 712.2,252.7 717.6,254.9 720.0,256.9 723.1,257.4 725.8,258.7 728.5,260.0 730.2,262.7 732.5,265.0 734.7,267.3 736.4,270.0 739.6,271.5 743.0,272.8 745.9,275.0 749.2,278.0 752.3,281.3 753.2,285.7 755.6,289.5 756.0,293.0 757.6,296.2 758.9,299.4 759.7,302.3 760.8,305.1 762.0,307.9 762.2,311.0 763.6,314.2 764.0,317.7 765.5,320.9 766.6,324.1 769.0,326.6 770.1,329.8 772.1,332.5 773.4,335.5 775.2,338.1 777.1,340.7 779.1,343.6 781.2,346.5 783.7,349.0 787.5,351.4 791.0,354.2 793.0,356.6 795.6,358.4 797.6,360.8 799.5,363.3 802.0,365.2 804.2,370.7 807.1,372.5 810.5,373.5 813.1,376.0 816.4,377.1 819.6,378.4 822.9,378.3 826.2,377.3 829.5,377.9 832.8,377.3 836.1,377.8 839.4,377.3 842.5,377.1 845.7,377.5 848.8,377.1 852.0,377.1 855.1,376.3 858.3,376.6 861.4,376.2 863.3,378.7 865.4,381.0 868.0,382.8 866.9,388.3 864.3,390.2 861.1,391.2 858.3,392.8 855.9,395.0 856.0,398.3 855.9,401.6 857.0,404.8 859.7,407.2 863.1,408.3 866.2,410.1 869.6,411.4 872.4,413.6 875.1,415.4 878.0,416.8 881.2,417.4 884.0,419.0 886.9,420.3 890.0,421.3 892.8,423.1 896.1,423.8 898.6,426.1 901.7,427.3 904.5,428.9 907.6,430.1 910.3,432.0 912.8,434.2 915.3,436.4 918.0,438.2 920.8,440.0 923.9,442.0 927.7,442.6 930.9,444.5 934.0,446.6 937.0,448.0 939.8,449.7 943.0,450.6 945.6,452.7 948.6,454.1 951.6,455.4 954.3,457.1 956.0,459.8 958.5,461.7 960.9,463.7 962.6,466.4 964.8,468.7 966.4,471.5 968.3,474.0 970.0,476.7 971.4,479.6 973.2,483.3 973.6,487.4 972.6,490.5 971.6,493.7 970.1,496.6 969.1,499.8 968.5,503.0 967.0,506.0 964.6,503.8 961.1,503.4 958.7,501.3 956.0,499.5 953.5,496.4 951.5,493.0 949.4,489.6 947.7,486.5 947.2,483.0 945.4,479.9 942.8,477.5 939.5,477.4 936.1,477.7 932.9,476.5 929.6,476.4 926.0,475.3 923.0,473.0 919.6,471.7 916.4,469.8 913.5,468.2 910.9,466.2 907.6,465.4 904.4,466.4 901.8,468.4 898.8,469.8 896.2,472.4 894.2,475.5 892.2,478.6 890.9,482.0 889.8,485.4 887.8,488.5 887.6,492.4 887.8,496.2 886.3,499.2 884.4,501.9 883.0,505.0 882.3,508.3 882.7,511.7 883.4,515.0 886.8,516.1 889.8,518.3 893.6,518.3 896.6,520.4 900.0,521.6 902.7,524.0 905.7,525.8 909.2,526.9 912.0,529.2 911.5,532.5 910.9,535.8 911.4,539.1 911.0,542.4 912.2,545.7 913.5,548.9 914.2,552.3 912.3,555.3 909.8,557.8 906.1,557.0 902.5,558.0 898.8,557.8 895.8,559.3 893.3,561.3 891.0,563.8 888.8,566.2 885.5,567.4 883.4,570.0 883.4,573.0 883.5,576.0 883.7,579.0 883.4,582.0 880.7,583.7 879.0,586.4 877.0,588.8 874.6,590.8 872.4,593.0 871.5,596.9 869.3,600.3 868.0,604.0 866.6,606.8 865.3,609.7 863.1,612.0 862.0,615.0 858.5,614.5 855.0,615.8 851.5,614.9 848.0,615.0 845.6,612.7 843.7,610.0 844.4,606.8 844.2,603.5 843.3,600.2 843.7,597.0 848.2,595.2 850.1,592.0 852.2,589.0 854.8,586.4 854.8,583.3 853.0,580.6 852.6,577.6 854.8,573.2 858.2,572.3 861.4,571.0 864.8,570.1 868.0,568.8 868.2,565.1 868.4,561.5 868.0,557.8 866.0,554.4 865.5,550.3 863.6,546.8 862.2,543.6 861.5,540.2 860.1,537.0 858.9,533.7 858.1,530.3 857.0,527.0 855.6,523.9 854.2,520.9 853.4,517.6 851.9,514.6 850.4,511.6 849.1,508.4 848.9,505.1 848.7,501.7 848.2,498.4 846.0,494.0 844.3,491.3 841.6,489.6 838.4,490.5 835.7,492.5 832.8,494.0 829.5,493.2 827.1,490.7 824.0,489.6 821.1,487.7 818.3,485.5 815.6,483.4 812.7,481.5 809.7,479.7 810.2,475.8 810.8,472.0 809.1,469.3 806.3,467.7 804.1,465.5 802.0,463.2 799.3,460.5 795.7,459.2 793.0,456.6 789.8,453.5 787.0,450.0 784.5,448.1 781.2,447.8 779.0,445.3 776.0,444.4 770.5,445.5 769.7,442.1 768.2,438.9 767.2,435.6 765.4,432.8 764.7,429.5 762.8,426.8 760.3,424.1 756.6,422.9 754.0,420.2 751.1,419.5 748.2,418.7 745.2,418.0 741.5,417.7 737.8,417.6 734.2,417.0 731.5,418.6 728.3,419.0 725.4,420.2 723.6,417.4 720.5,415.7 718.5,413.1 716.6,410.3 713.1,408.7 709.4,407.7 705.6,407.0 703.6,404.6 700.7,403.1 699.3,400.1 696.8,398.2 695.2,395.0 693.0,392.2 690.5,389.7 688.0,387.2 685.2,384.9 684.0,381.4 681.0,379.2 679.2,376.2 676.4,374.5 673.7,372.6 670.4,371.8 669.0,368.9 666.6,366.6 665.2,363.7 663.8,360.8 662.1,358.1 659.0,356.8 657.3,354.1 655.0,352.0 651.3,351.0 647.5,350.3 644.0,348.7 638.5,348.7 637.6,344.8 636.3,341.0 633.8,338.9 631.9,336.3 630.4,333.5 628.6,330.8 625.9,328.6 623.7,326.0 622.1,322.8 620.1,320.0 617.6,317.6 613.6,317.6 611.8,315.0 609.2,313.2 608.8,309.6 609.5,306.2 609.6,302.6 610.2,299.1 610.3,295.6 609.2,292.3 608.8,288.8 606.9,285.8 606.0,282.4 603.9,279.4 603.5,275.7 601.3,272.7 600.4,269.2 598.9,265.8 597.1,262.6 596.0,259.0 593.8,256.0 592.2,253.2 590.7,250.4 588.5,247.9 587.2,245.0 583.9,244.4 580.5,244.3 577.4,243.0 574.0,242.8 571.1,240.6 567.8,238.9 565.2,236.2 562.2,234.6 559.6,232.5 557.2,230.1 554.2,228.5 550.7,227.9 547.7,225.9 544.4,224.9 541.0,224.0 537.3,224.3 533.7,223.1 530.0,223.0 527.6,225.2 524.8,226.8 521.7,227.8 519.0,229.6 517.1,232.1 514.2,233.6 512.4,236.2 510.4,238.6 508.0,240.6 505.9,243.7 505.4,247.5 502.7,250.3 501.4,253.8 498.4,256.1 495.0,257.6 491.2,258.1 488.2,260.4 484.6,260.7 481.2,261.9 477.6,262.7 474.0,262.6 474.0,258.2 476.7,255.9 478.3,252.7 480.2,250.1 481.6,247.2 481.0,243.7 479.4,240.6 476.3,241.0 473.3,240.0 470.1,240.2 467.0,240.1 464.0,239.5 460.9,238.1 458.1,236.0 454.9,234.8 452.0,232.9 449.6,230.8 447.1,228.9 445.3,226.3 445.1,222.9 444.1,219.6 443.1,216.4 445.3,213.7 446.7,210.5 448.6,207.6 451.3,204.6 453.0,201.0 450.4,198.3 447.8,195.6 445.0,193.0 442.2,190.2 439.6,187.4 436.5,185.0 434.7,181.9 433.2,178.6 436.1,175.9 439.8,174.2 442.1,171.4 445.0,169.4 447.6,167.0 450.8,165.4 452.5,162.7 452.9,159.5 454.0,156.6 452.6,153.4 449.7,151.2 448.6,147.8 446.7,144.9 445.4,141.6 443.0,139.0 442.5,136.0 441.6,133.0 441.0,130.0Z"/>
<path d="M841.4,595.6 840.2,598.5 837.7,600.6 836.8,603.6 836.0,606.6 833.7,609.0 833.3,612.2 831.6,614.8 829.9,617.4 827.5,619.9 826.8,623.4 824.5,625.9 823.0,628.9 822.2,632.4 821.4,635.8 820.5,639.3 819.6,642.7 821.2,646.4 821.4,650.5 823.0,654.1 822.9,657.3 821.9,660.3 820.7,663.3 823.6,666.3 825.3,670.2 823.3,673.9 820.7,677.1 818.5,680.0 816.1,682.8 816.7,685.9 818.4,688.6 815.3,688.0 812.2,687.7 809.3,686.3 806.1,685.9 803.4,684.0 800.1,684.0 796.7,683.1 794.1,680.8 790.9,679.4 788.5,677.2 786.5,674.6 784.0,672.5 781.0,671.0 778.4,668.8 775.4,667.3 772.5,665.6 769.3,664.4 766.2,663.1 762.9,662.7 759.5,662.5 756.4,661.0 752.9,659.3 750.8,655.8 747.3,654.1 744.4,652.4 741.3,651.1 739.0,648.4 735.8,647.3 733.1,645.8 730.4,644.2 727.8,642.6 724.6,642.1 722.0,640.4 718.5,639.5 715.3,637.5 711.5,637.5 708.2,635.8 706.3,632.1 703.6,628.9 700.3,625.9 697.9,622.0 697.6,618.5 696.7,615.1 698.7,612.4 700.2,609.4 703.2,607.9 705.7,605.8 707.9,603.3 710.5,601.3 713.2,604.5 715.1,608.2 718.8,606.5 722.8,606.0 726.6,604.8 729.7,603.3 732.4,601.1 735.8,600.2 738.3,602.7 741.5,604.2 744.2,606.5 747.3,608.2 750.5,609.3 753.6,610.9 756.4,612.8 759.6,611.7 762.9,611.9 766.2,611.4 769.5,611.4 772.8,611.0 776.2,611.4 779.4,610.5 782.5,609.9 785.0,607.7 788.0,606.9 790.7,605.4 793.9,605.0 796.9,604.3 799.3,602.0 802.4,601.3 805.5,601.5 808.5,600.6 811.5,600.0 814.6,601.0 817.6,600.1 820.7,600.2 823.5,599.0 826.6,598.8 829.5,597.8 832.5,597.4 835.5,596.8 838.4,596.1 841.4,595.6Z"/>

<path d="M590.7,324.8 597.3,323.1 600.6,324 604.8,319.8 606.4,320.6 604.8,326.4 605.6,330.6 602.3,329.3 599,328.1 592.4,328.9 590.3,326.4Z"/>
<circle cx="589.5" cy="337.6" r="1.6"/><circle cx="600.2" cy="353.3" r="1.6"/><circle cx="627.1" cy="352" r="1.8"/><circle cx="626.2" cy="338.4" r="0.8"/><circle cx="636.6" cy="358.2" r="0.9"/>
<circle cx="720.8" cy="440" r="1.4"/><circle cx="715.9" cy="438.9" r="0.7"/><circle cx="741.6" cy="447.1" r="0.9"/>
<path d="M761,449 766,450 767,453 762,453Z"/><circle cx="768.4" cy="449.3" r="0.8"/><path d="M775.5,461 780,460.5 780,462.5 776,463Z"/>
<circle cx="730.5" cy="570.7" r="1.2"/><circle cx="679.4" cy="613.5" r="1.5"/><path d="M689.5,613.5 693.5,613 694,616.5 690,617Z"/><circle cx="692.3" cy="611.8" r="0.8"/>
<path d="M674.5,679 678,680 678.5,683 675,682Z"/>
<circle cx="584" cy="305" r="0.6"/><circle cx="837" cy="365" r="1"/><circle cx="614" cy="315" r="0.8"/>
<ellipse cx="510" cy="546" rx="2.2" ry="3.3"/><circle cx="513.5" cy="555.5" r="1.6"/><circle cx="559" cy="420" r="1.3"/><circle cx="564" cy="419" r="1.1"/><circle cx="575" cy="441" r="1"/>
<path d="M550.1,419.3 553.6,418.1 557.1,417.0 559.6,419.2 562.3,421.2 564.1,424.0 565.0,427.5 568.1,429.8 568.8,433.4 570.4,436.5 571.2,440.0 573.5,442.7 575.1,446.4 574.9,450.5 575.8,454.4 576.4,457.6 578.3,460.4 578.2,463.8 576.8,467.0 574.7,469.8 573.5,473.1 571.2,476.7 568.8,480.1 569.6,483.2 571.8,485.7 572.8,488.7 573.5,491.8 573.8,495.2 572.5,498.4 571.2,501.5 571.4,504.9 571.1,508.2 570.3,511.7 570.8,515.2 569.8,518.7 570.0,522.2 570.6,525.5 569.9,528.8 568.9,532.0 568.6,535.2 568.8,538.5 565.4,541.0 561.8,543.2 557.7,543.2 553.9,542.1 550.1,540.9 547.3,543.7 544.2,545.9 540.8,547.9 537.9,551.1 536.1,554.9 532.9,557.7 529.1,559.6 525.9,557.7 522.1,557.2 520.4,553.3 517.4,550.2 514.4,548.5 512.7,545.5 512.2,542.0 512.1,538.5 510.9,535.1 511.5,531.5 512.3,528.0 514.1,524.7 513.4,520.8 515.1,517.5 515.7,513.6 515.1,509.6 516.2,505.8 515.5,502.8 515.2,499.7 513.0,497.2 512.7,494.1 512.3,490.4 513.1,487.0 514.6,483.6 515.1,480.1 513.0,476.9 512.0,473.4 511.6,469.6 510.4,466.1 508.7,463.2 505.6,461.5 503.4,459.1 502.8,455.2 502.9,451.3 502.2,447.4 502.3,444.2 504.1,441.6 504.2,438.4 505.7,435.7 505.3,432.2 504.5,428.7 509.2,427.5 508.0,430.9 509.5,434.6 508.2,438.0 508.0,441.5 511.9,442.1 515.9,441.6 519.7,442.7 522.7,441.1 526.3,441.3 529.1,439.2 532.1,437.9 533.2,434.5 536.3,433.4 538.4,431.0 541.4,429.3 543.1,426.4 545.1,423.7 547.9,421.8 550.1,419.3Z"/>
</g>
<path fill="none" stroke="#000" stroke-width="1.6" stroke-linejoin="miter" stroke-miterlimit="2" d="M449.8,153.5 L453.1,153.0 L456.4,152.7 L459.7,152.0 L463.0,151.0 L466.3,151.2 L468.8,148.9 L471.7,147.9 L474.6,146.9 L477.9,147.2 L481.2,146.0 L484.5,146.9 L489.4,145.2 L490.7,141.9 L491.9,138.6 L491.8,135.5 L491.7,132.4 L490.3,129.5 L489.1,125.8 L490.3,122.1 M528.2,113.0 L529.1,118.8 L533.2,120.5 L530.7,125.4 L527.4,127.9 L526.3,131.5 L524.1,134.5 L525.7,137.7 L524.9,141.1 L526.2,144.9 L529.1,147.7 L528.9,151.1 L529.9,154.3 L532.8,157.0 L533.2,160.9 L529.9,160.0 L526.9,160.7 L524.1,162.6 L519.2,164.2 L518.6,168.0 L518.9,171.9 L520.1,175.1 L522.8,177.4 L524.7,180.2 L524.9,183.9 L528.5,183.3 L531.9,181.3 L535.8,181.9 L538.2,184.2 L539.7,187.1 L541.8,189.5 L542.3,193.0 L543.8,195.8 L545.9,198.4 L547.0,201.7 L549.8,203.8 L550.7,207.8 M550.7,207.8 L553.7,205.8 L553.5,202.3 L553.6,198.8 L552.9,195.3 L552.7,191.8 L554.4,189.0 L555.1,185.8 L555.8,182.6 L557.7,179.9 L562.1,180.3 L565.7,177.9 L568.7,180.0 L572.1,180.2 L575.6,179.9 L579.1,179.8 L582.2,178.0 L585.6,177.9 L589.1,180.3 L591.5,183.9 L594.8,183.9 L598.1,183.8 L601.0,186.5 L604.4,186.0 L607.5,186.9 L610.2,188.7 L613.5,188.1 L616.1,190.5 L619.4,189.9 L622.8,190.6 L625.9,187.7 L629.3,188.0 L632.8,189.8 L636.0,188.1 L639.3,187.9 L642.6,189.8 L646.3,188.6 L649.9,188.1 L653.2,189.9 L656.4,189.9 L659.7,189.9 L662.7,188.0 L665.8,187.1 L669.2,187.9 L672.2,187.7 L675.0,190.0 L678.1,189.7 L681.3,188.1 L684.2,188.8 L687.1,189.9 L690.1,192.8 L691.0,196.8 M481.6,241.7 L484.3,239.6 L488.0,240.8 L490.6,238.1 L494.0,238.4 L497.0,237.3 L497.6,234.3 L497.6,231.2 L499.2,228.5 L502.0,225.6 L502.7,221.3 L505.8,218.6 L509.6,217.5 L512.7,214.6 L516.8,214.2 L519.8,213.5 L522.7,212.4 L525.9,212.7 L528.9,210.4 L533.1,210.7 L535.8,207.8 L538.8,208.7 L541.8,207.8 L544.9,208.2 L547.4,210.8 L550.7,210.7 L554.0,210.9 L556.8,212.4 L559.7,213.7 L559.7,218.0 L561.7,221.7 L564.8,223.4 L568.7,223.3 L571.6,225.7 L572.5,229.1 L576.3,230.1 L578.2,232.7 L579.6,235.6 L582.0,239.2 L585.6,241.6 L587.5,245.0 M607.1,64.8 L606.3,69.1 L604.6,73.1 L603.8,78.0 L606.4,81.0 L607.9,84.6 L611.3,86.2 L612.8,89.6 L614.5,94.5 L614.8,98.1 L612.8,101.1 L613.0,104.4 L613.7,107.7 L613.2,111.3 L611.2,114.4 L609.3,117.6 L607.9,121.0 L609.1,124.2 L609.5,127.6 L611.3,130.8 L612.8,134.2 L616.3,135.0 L619.4,133.0 L622.7,132.5 L626.0,137.5 L627.7,140.8 L631.1,140.2 L634.3,139.1 L637.6,137.4 L639.3,134.2 L641.5,131.7 L644.2,130.0 L647.5,129.2 L651.0,126.6 L652.5,122.6 L656.8,122.7 L660.7,121.0 L661.7,117.4 L664.0,114.4 L667.8,111.8 L672.3,111.0 L675.6,106.1 L672.7,103.0 L669.0,101.1 L669.4,97.5 L667.3,94.5 L669.2,91.4 L672.3,89.6 L675.6,87.0 L677.7,83.6 L678.9,79.7 L680.5,75.5 L684.6,76.3 L688.8,76.4 L692.9,75.3 L697.1,74.7 M622.7,132.5 L622.1,136.1 L620.6,139.1 L616.6,140.8 L616.8,144.8 L614.5,147.4 L613.3,150.6 L614.1,154.1 L612.8,157.3 L613.6,160.6 L616.0,163.0 L618.4,165.1 L621.5,166.1 L624.2,167.7 L625.8,170.8 L629.5,171.0 L631.3,173.9 L634.5,176.0 L636.5,179.4 L639.3,181.9 L641.6,185.6 L645.3,187.9 M710.3,78.0 L710.4,81.3 L711.1,84.6 L708.6,87.6 L705.3,89.6 L702.0,91.2 L700.4,94.5 L698.2,97.4 L695.8,100.0 L692.1,101.1 L693.3,105.8 L698.3,108.3 L699.9,111.6 L698.5,115.6 L695.8,119.0 L697.4,124.0 L701.6,127.3 L703.2,132.2 L707.3,133.0 L712.3,129.7 L715.6,130.1 L720.6,130.6 L722.2,133.8 L724.7,136.7 L725.8,140.1 L726.3,143.8 M573.6,223.7 L576.5,222.3 L579.7,221.9 L582.3,219.7 L585.6,219.7 L588.4,221.9 L589.7,225.5 L592.0,228.2 L595.5,229.7 L598.3,231.6 L601.2,233.2 L604.4,234.4 L607.5,235.6 L611.9,236.6 L615.4,239.6 L618.7,239.0 L621.8,239.7 L624.1,243.0 L627.4,242.6 L630.5,242.7 L633.6,243.0 L636.1,239.7 L639.3,240.6 L642.5,239.5 L645.2,237.6 L648.5,236.7 L651.2,234.6 L654.4,235.9 L656.1,239.5 L659.8,240.0 L661.6,243.1 L660.8,246.6 L661.5,249.9 L662.5,253.0 L663.7,256.0 L666.4,258.2 L669.4,260.5 L672.7,262.0 L676.3,263.1 L679.5,264.2 L682.8,264.9 L686.2,263.9 M686.2,263.9 L688.7,260.9 L692.1,258.8 L694.5,255.7 L697.7,254.6 L699.4,251.6 L701.1,254.8 L704.4,256.5 L707.7,259.8 L709.1,256.4 L711.0,253.2 M686.2,263.9 L688.1,266.7 L691.2,268.1 L687.9,273.0 L684.5,275.6 L682.9,279.6 L681.1,282.8 L679.6,286.2 L680.1,290.4 L681.3,294.5 L678.0,297.8 L674.7,302.7 L675.1,306.0 L674.5,309.4 L674.7,312.7 L673.8,315.9 L674.8,319.5 L673.0,322.6 L669.5,323.9 L666.4,325.9 L664.9,329.2 L666.4,332.5 L663.1,334.1 L661.5,337.4 L658.7,340.3 L657.4,344.2 L654.9,347.3 L651.6,350.6 M691.2,273.0 L694.1,276.1 L697.8,278.0 L700.4,280.4 L703.4,282.3 L706.0,284.6 L711.0,282.9 L710.9,286.5 L712.7,289.5 L714.7,292.5 L713.6,296.3 L716.5,299.1 L716.0,302.7 L716.9,306.1 L718.5,309.3 L720.4,312.4 L720.9,316.0 L723.6,317.8 L726.7,318.4 L729.5,320.0 L732.5,320.9 L732.1,324.5 L734.1,327.5 M673.0,322.6 L674.6,326.6 L674.7,330.8 L678.2,329.9 L681.4,331.3 L684.6,332.5 L686.6,336.1 L689.5,339.1 L692.9,341.2 L695.7,343.9 L697.8,347.3 L702.7,349.0 L705.8,347.7 L707.5,344.9 L709.4,342.4 L712.6,340.1 L716.7,339.0 L719.3,335.8 L722.4,334.2 L726.1,334.1 L729.2,332.5 L731.0,329.4 L734.1,327.5 M734.1,327.5 L738.2,327.3 L742.4,327.5 L745.6,326.7 L748.5,325.3 L750.6,322.6 L754.2,322.9 L757.1,320.6 L760.6,320.4 L763.8,319.3 M734.1,327.5 L737.0,330.5 L739.1,334.1 L736.9,336.7 L733.6,337.4 L730.8,339.1 L729.3,342.2 L728.7,345.5 L729.2,349.0 L729.8,352.2 L731.6,354.9 L733.4,358.4 L737.5,359.3 L739.8,362.3 L736.2,364.1 L732.2,364.1 L728.3,364.8 L724.1,366.4 L725.2,369.6 L725.0,373.0 L728.2,373.5 L730.9,375.3 L733.5,377.1 L736.5,378.0 L738.2,381.3 L739.8,384.6 L743.3,385.2 L746.1,387.8 L749.7,387.9 L752.5,390.4 L756.3,390.0 L759.6,391.2 L764.1,391.2 L767.9,393.7 M767.9,393.7 L769.0,389.8 L773.2,388.3 L774.5,384.6 L777.1,381.4 L781.1,380.5 L784.2,382.3 L787.7,382.9 L789.4,387.9 L791.8,385.3 L793.4,382.0 L796.0,379.6 L798.9,377.4 L799.3,373.2 L802.6,371.4 M819.1,378.8 L820.2,381.9 L819.2,385.0 L820.5,388.1 L819.1,391.2 L815.2,392.9 L812.5,396.1 L812.4,400.4 L810.8,404.4 L813.8,405.8 L816.2,407.8 L817.4,411.0 L819.6,414.5 L822.4,417.6 L824.8,420.0 L823.5,425.0 L826.1,426.7 L828.5,428.7 L831.8,429.5 L835.0,430.0 L838.4,429.9 M769.5,406.0 L774.5,404.4 L778.1,406.4 L781.8,407.9 L786.0,407.7 L789.9,409.9 L794.3,411.0 L797.3,409.0 L800.9,408.7 L804.2,407.7 L807.8,405.7 L812.0,405.5 M767.9,394.5 L770.1,397.5 L769.5,401.1 L769.5,406.0 L767.1,408.6 L764.6,411.0 L762.4,414.0 L761.3,417.6 L758.0,420.9 M838.4,429.9 L839.9,432.8 L839.6,436.1 L837.2,439.8 L833.8,442.3 L829.7,443.5 L830.8,446.5 L831.0,449.7 L832.3,453.1 L834.7,455.9 L836.5,459.6 L838.4,463.3 L841.3,466.6 L844.6,469.5 L845.6,472.8 L848.1,475.1 L849.5,478.2 L846.9,480.9 L845.8,484.4 L843.4,487.0 L843.3,490.6 L846.0,492.9 L845.5,497.0 L848.3,499.3 M838.4,429.9 L842.2,429.7 L845.6,427.2 L849.5,427.4 L854.5,426.2 L857.7,429.2 L860.7,432.4 L858.2,436.1 L861.7,438.3 L865.6,439.8 L867.1,443.7 L870.6,446.0 L873.9,448.2 L876.8,451.0 L880.5,450.6 L884.2,449.7 L889.2,452.2 L888.9,455.4 L889.9,458.2 L891.6,460.9 L892.6,464.5 L895.8,466.6 L897.8,469.5 M849.5,494.3 L853.2,495.1 L857.0,494.9 L860.7,499.3 L864.0,498.1 L867.6,499.3 L871.0,499.3 L874.3,498.0 L875.9,495.4 L877.4,492.7 L877.3,489.3 L879.3,486.9 L883.5,488.4 L887.9,487.5"/>
<g fill="#000"><circle cx="508.1" cy="113.6" r="4.5"/><circle cx="523.2" cy="123.0" r="4.5"/><circle cx="549.0" cy="122.4" r="4.5"/><circle cx="506.4" cy="132.5" r="4.5"/><circle cx="513.7" cy="134.0" r="4.5"/><circle cx="520.2" cy="138.3" r="4.5"/><circle cx="524.8" cy="133.6" r="4.5"/><circle cx="529.9" cy="134.0" r="4.5"/><circle cx="531.1" cy="129.5" r="4.5"/><circle cx="536.7" cy="127.7" r="4.5"/><circle cx="534.1" cy="138.6" r="4.5"/><circle cx="494.3" cy="145.1" r="4.5"/><circle cx="548.5" cy="155.5" r="4.5"/><circle cx="496.0" cy="158.5" r="4.5"/><circle cx="478.2" cy="162.0" r="4.5"/><circle cx="485.0" cy="162.3" r="4.5"/><circle cx="507.7" cy="179.4" r="4.5"/><circle cx="477.1" cy="176.0" r="4.5"/><circle cx="472.4" cy="181.2" r="4.5"/><circle cx="480.9" cy="181.4" r="4.5"/><circle cx="476.9" cy="186.2" r="4.5"/><circle cx="481.2" cy="185.5" r="4.5"/><circle cx="480.1" cy="199.8" r="4.5"/><circle cx="499.6" cy="198.0" r="4.5"/><circle cx="490.3" cy="205.9" r="4.5"/><circle cx="579.5" cy="87.3" r="4.5"/><circle cx="564.8" cy="147.2" r="4.5"/><circle cx="668.1" cy="80.7" r="4.5"/><circle cx="684.4" cy="80.4" r="4.5"/><circle cx="658.8" cy="90.9" r="4.5"/><circle cx="670.5" cy="92.4" r="4.5"/><circle cx="682.1" cy="91.5" r="4.5"/><circle cx="650.8" cy="96.8" r="4.5"/><circle cx="700.0" cy="97.7" r="4.5"/><circle cx="676.7" cy="104.5" r="4.5"/><circle cx="627.0" cy="109.7" r="4.5"/><circle cx="602.5" cy="110.2" r="4.5"/><circle cx="601.6" cy="116.9" r="4.5"/><circle cx="624.0" cy="121.3" r="4.5"/><circle cx="698.2" cy="119.2" r="4.5"/><circle cx="594.5" cy="127.8" r="4.5"/><circle cx="620.8" cy="128.7" r="4.5"/><circle cx="655.8" cy="137.1" r="4.5"/><circle cx="664.6" cy="134.9" r="4.5"/><circle cx="675.8" cy="132.6" r="4.5"/><circle cx="676.7" cy="139.4" r="4.5"/><circle cx="676.7" cy="146.5" r="4.5"/><circle cx="706.2" cy="140.1" r="4.5"/><circle cx="596.4" cy="150.5" r="4.5"/><circle cx="607.9" cy="150.1" r="4.5"/><circle cx="616.5" cy="157.6" r="4.5"/><circle cx="612.4" cy="155.8" r="4.5"/><circle cx="611.5" cy="161.2" r="4.5"/><circle cx="627.9" cy="153.2" r="4.5"/><circle cx="631.5" cy="157.3" r="4.5"/><circle cx="656.2" cy="146.0" r="4.5"/><circle cx="658.3" cy="146.5" r="4.5"/><circle cx="654.0" cy="146.9" r="4.5"/><circle cx="661.2" cy="152.8" r="4.5"/><circle cx="657.1" cy="150.5" r="4.5"/><circle cx="650.3" cy="157.6" r="4.5"/><circle cx="647.6" cy="162.6" r="4.5"/><circle cx="657.2" cy="165.3" r="4.5"/><circle cx="652.6" cy="171.0" r="4.5"/><circle cx="665.1" cy="168.0" r="4.5"/><circle cx="671.7" cy="159.8" r="4.5"/><circle cx="686.0" cy="157.3" r="4.5"/><circle cx="691.9" cy="159.8" r="4.5"/><circle cx="621.8" cy="175.5" r="4.5"/><circle cx="641.0" cy="173.7" r="4.5"/><circle cx="604.0" cy="178.2" r="4.5"/><circle cx="608.2" cy="185.7" r="4.5"/><circle cx="660.6" cy="183.6" r="4.5"/><circle cx="672.3" cy="196.4" r="4.5"/><circle cx="739.0" cy="135.3" r="4.5"/><circle cx="741.9" cy="114.4" r="4.5"/><circle cx="537.3" cy="223.0" r="4.5"/><circle cx="572.3" cy="241.3" r="4.5"/><circle cx="578.9" cy="247.6" r="4.5"/><circle cx="628.2" cy="208.3" r="4.5"/><circle cx="686.2" cy="223.0" r="4.5"/><circle cx="604.1" cy="266.9" r="4.5"/><circle cx="643.1" cy="263.9" r="4.5"/><circle cx="705.9" cy="266.8" r="4.5"/><circle cx="633.5" cy="282.9" r="4.5"/><circle cx="646.6" cy="292.4" r="4.5"/><circle cx="662.4" cy="307.2" r="4.5"/><circle cx="658.9" cy="311.6" r="4.5"/><circle cx="705.9" cy="306.2" r="4.5"/><circle cx="711.3" cy="321.8" r="4.5"/><circle cx="710.7" cy="328.4" r="4.5"/><circle cx="667.2" cy="358.8" r="4.5"/><circle cx="681.9" cy="373.2" r="4.5"/><circle cx="698.8" cy="380.0" r="4.5"/><circle cx="712.5" cy="377.1" r="4.5"/><circle cx="857.0" cy="391.6" r="4.5"/><circle cx="871.3" cy="429.4" r="4.5"/><circle cx="803.5" cy="426.8" r="4.5"/><circle cx="782.6" cy="428.4" r="4.5"/><circle cx="788.8" cy="430.1" r="4.5"/><circle cx="830.2" cy="476.3" r="4.5"/><circle cx="887.4" cy="455.0" r="4.5"/><circle cx="915.3" cy="447.7" r="4.5"/><circle cx="779.3" cy="442.2" r="4.5"/><circle cx="776.7" cy="446.0" r="4.5"/><circle cx="783.7" cy="446.0" r="4.5"/><circle cx="790.3" cy="449.9" r="4.5"/><circle cx="795.8" cy="455.0" r="4.5"/><circle cx="823.0" cy="565.3" r="4.5"/><circle cx="816.6" cy="574.5" r="4.5"/><circle cx="784.0" cy="580.2" r="4.5"/><circle cx="793.6" cy="578.4" r="4.5"/><circle cx="805.8" cy="578.4" r="4.5"/><circle cx="810.4" cy="583.0" r="4.5"/><circle cx="812.0" cy="588.7" r="4.5"/><circle cx="817.3" cy="639.9" r="4.5"/><circle cx="749.1" cy="652.3" r="4.5"/><circle cx="783.3" cy="648.0" r="4.5"/><circle cx="791.3" cy="654.8" r="4.5"/><circle cx="804.0" cy="653.0" r="4.5"/><circle cx="814.3" cy="661.0" r="4.5"/><circle cx="808.8" cy="665.6" r="4.5"/><circle cx="825.3" cy="663.3" r="4.5"/><circle cx="827.2" cy="665.6" r="4.5"/><circle cx="801.7" cy="673.0" r="4.5"/><circle cx="802.8" cy="677.1" r="4.5"/><circle cx="799.6" cy="681.0" r="4.5"/><circle cx="816.8" cy="674.8" r="4.5"/><circle cx="540.0" cy="511.7" r="4.5"/></g><g fill="#ff0000"><circle cx="508.1" cy="113.6" r="1.45"/><circle cx="523.2" cy="123.0" r="1.45"/><circle cx="549.0" cy="122.4" r="1.45"/><circle cx="506.4" cy="132.5" r="1.45"/><circle cx="513.7" cy="134.0" r="1.45"/><circle cx="520.2" cy="138.3" r="1.45"/><circle cx="524.8" cy="133.6" r="1.45"/><circle cx="529.9" cy="134.0" r="1.45"/><circle cx="531.1" cy="129.5" r="1.45"/><circle cx="536.7" cy="127.7" r="1.45"/><circle cx="534.1" cy="138.6" r="1.45"/><circle cx="494.3" cy="145.1" r="1.45"/><circle cx="548.5" cy="155.5" r="1.45"/><circle cx="496.0" cy="158.5" r="1.45"/><circle cx="478.2" cy="162.0" r="1.45"/><circle cx="485.0" cy="162.3" r="1.45"/><circle cx="507.7" cy="179.4" r="1.45"/><circle cx="477.1" cy="176.0" r="1.45"/><circle cx="472.4" cy="181.2" r="1.45"/><circle cx="480.9" cy="181.4" r="1.45"/><circle cx="476.9" cy="186.2" r="1.45"/><circle cx="481.2" cy="185.5" r="1.45"/><circle cx="480.1" cy="199.8" r="1.45"/><circle cx="499.6" cy="198.0" r="1.45"/><circle cx="490.3" cy="205.9" r="1.45"/><circle cx="579.5" cy="87.3" r="1.45"/><circle cx="564.8" cy="147.2" r="1.45"/><circle cx="668.1" cy="80.7" r="1.45"/><circle cx="684.4" cy="80.4" r="1.45"/><circle cx="658.8" cy="90.9" r="1.45"/><circle cx="670.5" cy="92.4" r="1.45"/><circle cx="682.1" cy="91.5" r="1.45"/><circle cx="650.8" cy="96.8" r="1.45"/><circle cx="700.0" cy="97.7" r="1.45"/><circle cx="676.7" cy="104.5" r="1.45"/><circle cx="627.0" cy="109.7" r="1.45"/><circle cx="602.5" cy="110.2" r="1.45"/><circle cx="601.6" cy="116.9" r="1.45"/><circle cx="624.0" cy="121.3" r="1.45"/><circle cx="698.2" cy="119.2" r="1.45"/><circle cx="594.5" cy="127.8" r="1.45"/><circle cx="620.8" cy="128.7" r="1.45"/><circle cx="655.8" cy="137.1" r="1.45"/><circle cx="664.6" cy="134.9" r="1.45"/><circle cx="675.8" cy="132.6" r="1.45"/><circle cx="676.7" cy="139.4" r="1.45"/><circle cx="676.7" cy="146.5" r="1.45"/><circle cx="706.2" cy="140.1" r="1.45"/><circle cx="596.4" cy="150.5" r="1.45"/><circle cx="607.9" cy="150.1" r="1.45"/><circle cx="616.5" cy="157.6" r="1.45"/><circle cx="612.4" cy="155.8" r="1.45"/><circle cx="611.5" cy="161.2" r="1.45"/><circle cx="627.9" cy="153.2" r="1.45"/><circle cx="631.5" cy="157.3" r="1.45"/><circle cx="656.2" cy="146.0" r="1.45"/><circle cx="658.3" cy="146.5" r="1.45"/><circle cx="654.0" cy="146.9" r="1.45"/><circle cx="661.2" cy="152.8" r="1.45"/><circle cx="657.1" cy="150.5" r="1.45"/><circle cx="650.3" cy="157.6" r="1.45"/><circle cx="647.6" cy="162.6" r="1.45"/><circle cx="657.2" cy="165.3" r="1.45"/><circle cx="652.6" cy="171.0" r="1.45"/><circle cx="665.1" cy="168.0" r="1.45"/><circle cx="671.7" cy="159.8" r="1.45"/><circle cx="686.0" cy="157.3" r="1.45"/><circle cx="691.9" cy="159.8" r="1.45"/><circle cx="621.8" cy="175.5" r="1.45"/><circle cx="641.0" cy="173.7" r="1.45"/><circle cx="604.0" cy="178.2" r="1.45"/><circle cx="608.2" cy="185.7" r="1.45"/><circle cx="660.6" cy="183.6" r="1.45"/><circle cx="672.3" cy="196.4" r="1.45"/><circle cx="739.0" cy="135.3" r="1.45"/><circle cx="741.9" cy="114.4" r="1.45"/><circle cx="537.3" cy="223.0" r="1.45"/><circle cx="572.3" cy="241.3" r="1.45"/><circle cx="578.9" cy="247.6" r="1.45"/><circle cx="628.2" cy="208.3" r="1.45"/><circle cx="686.2" cy="223.0" r="1.45"/><circle cx="604.1" cy="266.9" r="1.45"/><circle cx="643.1" cy="263.9" r="1.45"/><circle cx="705.9" cy="266.8" r="1.45"/><circle cx="633.5" cy="282.9" r="1.45"/><circle cx="646.6" cy="292.4" r="1.45"/><circle cx="662.4" cy="307.2" r="1.45"/><circle cx="658.9" cy="311.6" r="1.45"/><circle cx="705.9" cy="306.2" r="1.45"/><circle cx="711.3" cy="321.8" r="1.45"/><circle cx="710.7" cy="328.4" r="1.45"/><circle cx="667.2" cy="358.8" r="1.45"/><circle cx="681.9" cy="373.2" r="1.45"/><circle cx="698.8" cy="380.0" r="1.45"/><circle cx="712.5" cy="377.1" r="1.45"/><circle cx="857.0" cy="391.6" r="1.45"/><circle cx="871.3" cy="429.4" r="1.45"/><circle cx="803.5" cy="426.8" r="1.45"/><circle cx="782.6" cy="428.4" r="1.45"/><circle cx="788.8" cy="430.1" r="1.45"/><circle cx="830.2" cy="476.3" r="1.45"/><circle cx="887.4" cy="455.0" r="1.45"/><circle cx="915.3" cy="447.7" r="1.45"/><circle cx="779.3" cy="442.2" r="1.45"/><circle cx="776.7" cy="446.0" r="1.45"/><circle cx="783.7" cy="446.0" r="1.45"/><circle cx="790.3" cy="449.9" r="1.45"/><circle cx="795.8" cy="455.0" r="1.45"/><circle cx="823.0" cy="565.3" r="1.45"/><circle cx="816.6" cy="574.5" r="1.45"/><circle cx="784.0" cy="580.2" r="1.45"/><circle cx="793.6" cy="578.4" r="1.45"/><circle cx="805.8" cy="578.4" r="1.45"/><circle cx="810.4" cy="583.0" r="1.45"/><circle cx="812.0" cy="588.7" r="1.45"/><circle cx="817.3" cy="639.9" r="1.45"/><circle cx="749.1" cy="652.3" r="1.45"/><circle cx="783.3" cy="648.0" r="1.45"/><circle cx="791.3" cy="654.8" r="1.45"/><circle cx="804.0" cy="653.0" r="1.45"/><circle cx="814.3" cy="661.0" r="1.45"/><circle cx="808.8" cy="665.6" r="1.45"/><circle cx="825.3" cy="663.3" r="1.45"/><circle cx="827.2" cy="665.6" r="1.45"/><circle cx="801.7" cy="673.0" r="1.45"/><circle cx="802.8" cy="677.1" r="1.45"/><circle cx="799.6" cy="681.0" r="1.45"/><circle cx="816.8" cy="674.8" r="1.45"/><circle cx="540.0" cy="511.7" r="1.45"/></g>
</svg>

<div id="panel">
  <div class="edge"></div>
  <svg class="abs" style="left:0;top:0" width="297" height="310" viewBox="0 0 297 310">
    <!-- close X -->
    <path d="M5.2,2.5 L27,24.2 M27,2.5 L5.2,24.2" stroke="#0a86a0" stroke-width="1.7" fill="none"/>
    <!-- layers icon -->
    <path d="M275.3,5.9 L287.6,12.3 L277.9,21.6 L265.4,15.4Z" fill="#0a86a0"/>
    <path d="M266.3,20.6 L278.4,26.2 L287.5,17" stroke="#0a86a0" stroke-width="2.2" fill="none" stroke-linecap="round"/>
    <!-- title map icon -->
    <g fill="#2b2b2b">
      <path d="M6,47.9 L9.9,49.3 L9.9,62.7 L6,61.5Z"/>
      <path d="M12,49.3 L15.9,47.9 L15.9,61.3 L12,62.7Z"/>
      <path d="M17.9,51.5 L19,54 L20,51.5 L21.9,52.3 L21.9,62.7 L17.9,61.3Z"/>
      <circle cx="18.9" cy="49" r="2.1" fill="none" stroke="#2b2b2b" stroke-width="1.2"/>
      <path d="M17.4,50 L18.9,53.6 L20.4,50Z"/>
    </g>
    <!-- filter funnel -->
    <rect x="267" y="86" width="12" height="1.2" fill="#333"/>
    <path d="M267.5,88.3 L278.6,88.3 L274,93.6 L273.8,98.7 L272.2,99.8 L272.2,93.6Z" fill="#333"/>
    <!-- gear -->
    <g transform="translate(281.9,129.7)" fill="#0a86a0">
      <circle r="5"/>
      <g id="teeth"><rect x="-1.6" y="-7" width="3.2" height="3" rx="0.6"/></g>
      <rect x="-1.6" y="-7" width="3.2" height="3" rx="0.6" transform="rotate(45)"/>
      <rect x="-1.6" y="-7" width="3.2" height="3" rx="0.6" transform="rotate(90)"/>
      <rect x="-1.6" y="-7" width="3.2" height="3" rx="0.6" transform="rotate(135)"/>
      <rect x="-1.6" y="-7" width="3.2" height="3" rx="0.6" transform="rotate(180)"/>
      <rect x="-1.6" y="-7" width="3.2" height="3" rx="0.6" transform="rotate(225)"/>
      <rect x="-1.6" y="-7" width="3.2" height="3" rx="0.6" transform="rotate(270)"/>
      <rect x="-1.6" y="-7" width="3.2" height="3" rx="0.6" transform="rotate(315)"/>
      <circle r="2" fill="#fff"/>
    </g>
  </svg>
  <div class="abs title">Unesco Italian Items</div>
  <div class="abs filter"><div class="ph">Filter layers</div><div class="btn"></div></div>
  <div class="abs tb">
    <div class="sep" style="left:29px"></div><div class="sep" style="left:59px"></div><div class="sep" style="left:89px"></div><div class="sep" style="left:119px"></div><div class="sep" style="left:149px"></div><div class="sep" style="left:179px"></div>
  </div>
  <div class="abs grp" style="top:158px"></div>
  <div class="abs vline" style="top:183px;height:36px"></div>
  <div class="abs lbl" style="left:72.5px;top:163.5px;letter-spacing:0.37px">Default</div>
  <div class="abs item" style="top:192px"></div>
  <div class="abs lbl sm" style="left:89.5px;top:196.5px">Unesco Items</div>
  <div class="abs prog" style="left:24px;top:217px;width:262px"></div>
  <div class="abs badge" style="left:262px;top:212px">100 %</div>
  <div class="abs grp" style="top:235px"></div>
  <div class="abs vline" style="top:260px;height:36px"></div>
  <div class="abs lbl" style="left:72.5px;top:240.5px;letter-spacing:0.37px">regioni</div>
  <div class="abs item sel" style="top:267px"></div>
  <div class="abs lbl sm" style="left:89.5px;top:273.5px">Regioni Italiane</div>
  <div class="abs prog" style="left:24px;top:294px;width:262px"></div>
  <div class="abs badge" style="left:262px;top:289px">100 %</div>
  <svg class="abs" style="left:0;top:0" width="297" height="310" viewBox="0 0 297 310">
    <g fill="none" stroke="#fff" stroke-width="1.6">
      <!-- zoom extent -->
      <path d="M12.8,127 V123.4 H16.4 M23.6,123.4 H27.2 V127 M27.2,133.6 V137.2 H23.6 M16.4,137.2 H12.8 V133.6"/>
      <circle cx="18.8" cy="129" r="3.3"/>
      <path d="M21.3,131.5 L25.2,135.2" stroke-width="2"/>
    </g>
    <g fill="#fff">
      <!-- wrench -->
      <path d="M44.5,123.3 C42.6,124.2 42.1,126.6 43.4,128.2 C44.4,129.4 46,129.7 47.3,129.2 L54.7,137 C55.3,137.6 56.3,137.6 56.9,137 C57.5,136.4 57.5,135.4 56.9,134.8 L49.4,127.2 C49.9,125.6 49.4,123.9 48,122.9 L46.9,122.9 L48.2,125.3 L46.3,126.9 L44.3,125.3Z"/>
      <!-- layers+funnel -->
      <path d="M79.6,127 L84.5,129.7 L78.8,135 L72.8,132 Z"/>
      <path d="M72.3,133.6 L78.9,136.9 L85,131 L85.6,132.2 L78.9,138.3 L72,134.9Z"/>
      <path d="M81.7,123.1 L87.6,123.1 L85.3,126.3 L85.3,128.7 L84.1,128.2 L84.1,126.3Z"/>
      <!-- table -->
      <path d="M102.2,123.3 H117.3 V137.5 H102.2Z M103.6,127.2 V130.2 H107.6 V127.2Z M109,127.2 V130.2 H112.6 V127.2Z M114,127.2 V130.2 H115.9 V127.2Z M103.6,131.5 V136.1 H107.6 V131.5Z M109,131.5 V136.1 H112.6 V131.5Z M114,131.5 V136.1 H115.9 V131.5Z" fill-rule="evenodd"/>
      <!-- trash -->
      <path d="M134,124.9 H146 V126.3 H134Z M137.8,123.2 H142.2 V124.9 H137.8Z"/>
      <path d="M134.8,127 H145.2 L144.1,137.5 H135.9Z M137,128.5 L137.6,136 H138.4 L138.1,128.5Z M139.6,128.5 V136 H140.4 V128.5Z M141.9,128.5 L141.6,136 H142.4 L143,128.5Z" fill-rule="evenodd"/>
      <!-- bar chart -->
      <rect x="162.8" y="130.4" width="2.1" height="6.6"/>
      <rect x="166.6" y="126.4" width="2.1" height="10.6"/>
      <rect x="170.6" y="128" width="2.1" height="9"/>
      <rect x="174.7" y="123.9" width="2.1" height="13.1"/>
    </g>
    <g fill="none" stroke="#fff">
      <circle cx="199.9" cy="130.5" r="6.4" stroke-width="1.7"/>
    </g>
    <path d="M198.9,126.3 H200.9 V130.2 H203.2 L199.9,134 L196.6,130.2 H198.9Z" fill="#fff"/>

    <!-- tree: group 1 -->
    <path d="M23,168.7 L28.9,173.8 L34.8,168.7" fill="none" stroke="#222" stroke-width="1.4"/>
    <rect x="39" y="165.1" width="12" height="12" rx="2.2" fill="#127ef5"/>
    <path d="M41.5,171 L44.3,174 L48.6,168" fill="none" stroke="#fff" stroke-width="1.5"/>
    <g fill="#2a2a2a">
      <path d="M55.2,167 H59.4 L60.4,168.1 H66.2 V169.8 H58.4 L56.2,175.9 H55.2Z"/>
      <path d="M58.9,170.6 H68.3 L65.9,175.9 H56.7Z"/>
    </g>
    <!-- tree: item 1 -->
    <g fill="#333">
      <rect x="28.3" y="198.6" width="1.6" height="1.6"/><rect x="32.3" y="198.6" width="1.6" height="1.6"/>
      <rect x="28.3" y="203.2" width="1.6" height="1.6"/><rect x="32.3" y="203.2" width="1.6" height="1.6"/>
      <rect x="28.3" y="208.2" width="1.6" height="1.6"/><rect x="32.3" y="208.2" width="1.6" height="1.6"/>
    </g>
    <path d="M43.4,198.6 L48.6,204 L43.4,209.3" fill="none" stroke="#222" stroke-width="1.4"/>
    <rect x="56" y="198.4" width="12" height="12" rx="2.2" fill="#127ef5"/>
    <path d="M58.5,204.3 L61.3,207.3 L65.6,201.3" fill="none" stroke="#fff" stroke-width="1.5"/>
    <g fill="#2a2a2a">
      <path d="M77.7,199.2 L83.6,202.4 L78.5,207.1 L72.5,203.9Z"/>
      <path d="M72.4,205.2 L78.5,208.6 L83.7,203.7 L83.9,205 L78.5,210 L72.2,206.5Z"/>
    </g>
    <!-- tree: group 2 -->
    <g fill="#333">
      <rect x="10.8" y="240.6" width="1.6" height="1.6"/><rect x="14.8" y="240.6" width="1.6" height="1.6"/>
      <rect x="10.8" y="245.2" width="1.6" height="1.6"/><rect x="14.8" y="245.2" width="1.6" height="1.6"/>
      <rect x="10.8" y="250.2" width="1.6" height="1.6"/><rect x="14.8" y="250.2" width="1.6" height="1.6"/>
    </g>
    <path d="M23,245.2 L28.9,250.3 L34.8,245.2" fill="none" stroke="#222" stroke-width="1.4"/>
    <rect x="39" y="242" width="12" height="12" rx="2.2" fill="#127ef5"/>
    <path d="M41.5,247.9 L44.3,250.9 L48.6,244.9" fill="none" stroke="#fff" stroke-width="1.5"/>
    <g fill="#2a2a2a">
      <path d="M55.2,243.9 H59.4 L60.4,245 H66.2 V246.7 H58.4 L56.2,252.8 H55.2Z"/>
      <path d="M58.9,247.5 H68.3 L65.9,252.8 H56.7Z"/>
    </g>
    <!-- tree: item 2 -->
    <g fill="#333">
      <rect x="28.3" y="275.6" width="1.6" height="1.6"/><rect x="32.3" y="275.6" width="1.6" height="1.6"/>
      <rect x="28.3" y="280.2" width="1.6" height="1.6"/><rect x="32.3" y="280.2" width="1.6" height="1.6"/>
      <rect x="28.3" y="285.2" width="1.6" height="1.6"/><rect x="32.3" y="285.2" width="1.6" height="1.6"/>
    </g>
    <path d="M43.4,275.6 L48.6,281 L43.4,286.3" fill="none" stroke="#222" stroke-width="1.4"/>
    <rect x="56" y="275.4" width="12" height="12" rx="2.2" fill="#127ef5"/>
    <path d="M58.5,281.3 L61.3,284.3 L65.6,278.3" fill="none" stroke="#fff" stroke-width="1.5"/>
    <g fill="#2a2a2a">
      <path d="M77.7,276.2 L83.6,279.4 L78.5,284.1 L72.5,280.9Z"/>
      <path d="M72.4,282.2 L78.5,285.6 L83.7,280.7 L83.9,282 L78.5,287 L72.2,283.5Z"/>
    </g>
  </svg>
</div>
</body></html>
